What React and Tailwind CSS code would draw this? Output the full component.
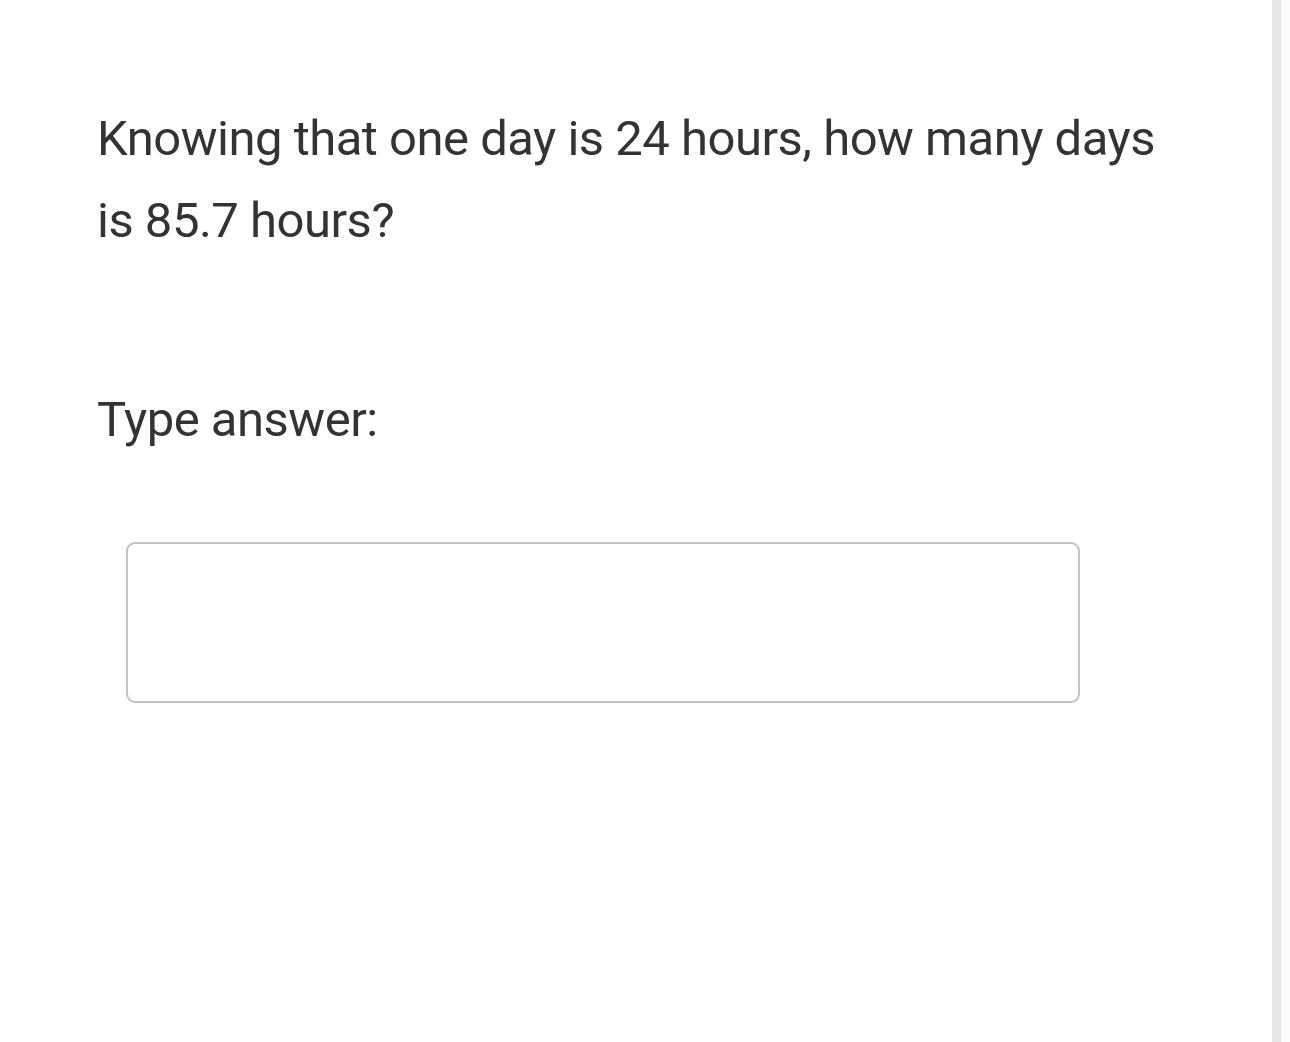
export default function App() {
  return (
    <div className="flex h-[1042px] w-[1290px] overflow-hidden bg-white" style={{ fontFamily: "Roboto, 'Liberation Sans', sans-serif" }}>
      <div className="flex-1 pl-[97px] pt-[98px]">
        <p className="w-[1080px] text-[49px] leading-[82px] tracking-[-0.5px] text-[#333333]">
          Knowing that one day is 24 hours, how many days is 85.7 hours?
        </p>
        <p className="mt-[117px] text-[49px] leading-[82px] tracking-[-0.5px] text-[#333333]">Type answer:</p>
        <div className="ml-[29px] mt-[81px] h-[161px] w-[954px] rounded-[9px] border-[2.5px] border-[#c2c2c2] bg-white"></div>
      </div>
      <div className="h-full w-[9px] bg-[#e6e6e6]"></div>
      <div className="h-full w-[9px] bg-[#fbfbfb]"></div>
    </div>
  );
}
